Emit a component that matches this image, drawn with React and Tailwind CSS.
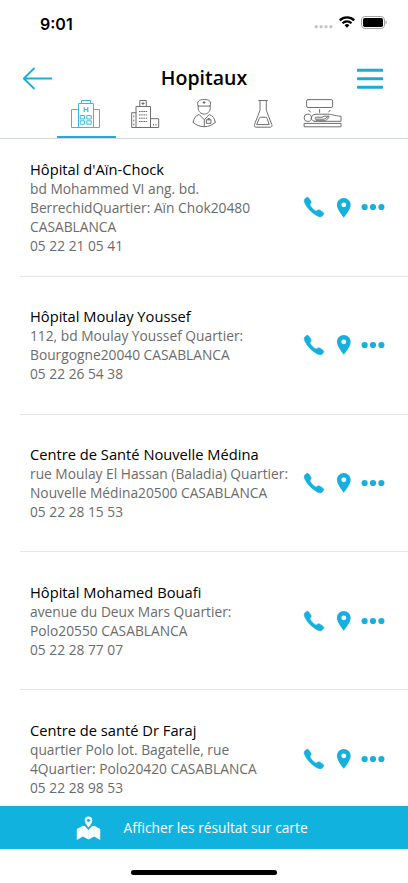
import React, { useState } from 'react';
import { IoIosCall } from 'react-icons/io';
import { MdPlace } from 'react-icons/md';

const hospitals = [
  { name: "Hôpital d'Aïn-Chock", address: ['bd Mohammed VI ang. bd.', 'BerrechidQuartier: Aïn Chok20480', 'CASABLANCA'], phone: '05 22 21 05 41' },
  { name: 'Hôpital Moulay Youssef', address: ['112, bd Moulay Youssef Quartier:', 'Bourgogne20040 CASABLANCA'], phone: '05 22 26 54 38' },
  { name: 'Centre de Santé Nouvelle Médina', address: ['rue Moulay El Hassan (Baladia) Quartier:', 'Nouvelle Médina20500 CASABLANCA'], phone: '05 22 28 15 53' },
  { name: 'Hôpital Mohamed Bouafi', address: ['avenue du Deux Mars Quartier:', 'Polo20550 CASABLANCA'], phone: '05 22 28 77 07' },
  { name: 'Centre de santé Dr Faraj', address: ['quartier Polo lot. Bagatelle, rue', '4Quartier: Polo20420 CASABLANCA'], phone: '05 22 28 98 53' }
];

const TabIcon = ({ children }) => (
  <svg className="w-10 h-8" viewBox="0 0 40 32" fill="none" stroke="currentColor" strokeWidth="1" strokeLinejoin="round" strokeLinecap="round">
    {children}
  </svg>
);

const HospitalIcon = () => (
  <TabIcon>
    <path d="M12.5 11.5h-7v18h28v-18h-6M12.5 29.5v-24h15v24M15.5 5.5v-3h9v3" />
    <path d="M18.2 9.5v4M21.8 9.5v4M18.2 11.5h3.6" strokeWidth="1.2" />
    <path d="M14.6 17.6h4v3.4h-4zM21.2 17.6h4v3.4h-4zM14.6 22.8h4v3.4h-4zM21.2 22.8h4v3.4h-4z" />
  </TabIcon>
);

const ClinicIcon = () => (
  <TabIcon>
    <path d="M11 29.5v-21h14.5v21M11 14.7H6.7v14.8h27v-8.8h-8.2M14.8 8.5v-6h6.5v6" />
    <path d="M18 4.3v2.4M16.8 5.5h2.4" />
    <path d="M14 13.5h8.4M14 16.9h8.4M14 20.2h8.4M14 23.5h8.4" strokeDasharray="1.6 0.6" strokeLinecap="butt" />
    <path d="M8.8 18v1M8.8 22v1M8.8 26v1M28.5 26.3v.8M31 26.3v.8" />
  </TabIcon>
);

const DoctorIcon = () => (
  <TabIcon>
    <path d="M14 7.7C12.6 3.6 14.8 1.5 20.2 1.5s7.4 2.1 6 6.2zM14.2 7.7v2.4c0 3.4 2.8 6 6 6s6-2.6 6-6V7.7" />
    <path d="M20.1 3.4v2.2M19 4.5h2.2" />
    <path d="M9.2 24.5c.4-4.4 2.3-6.7 6-8l5.1 5.3 4.9-5.3c3.7 1.3 5.6 3.6 6 8M9.2 24.5c2.8 2.5 6.7 4.2 11.1 4.2s8.1-1.7 10.9-4.2M20.3 21.8v6.9" />
    <path d="M22.7 21.8H27v3.5h-4.3zM24 21.8v-1.2h1.8v1.2" />
  </TabIcon>
);

const FlaskIcon = () => (
  <TabIcon>
    <path d="M15.7 2.5h8.7M17 2.5v9.8l-5.5 14.2c-.5 1.5.1 2.7 1.5 2.7h14.3c1.4 0 2-1.2 1.5-2.7l-5.5-14.2V2.5" />
    <path d="M16.3 20.2c.2-.8.6-1 1.2-1h5.3c.6 0 1 .2 1.2 1l2.2 6.4H14.1z" />
  </TabIcon>
);

const ScannerIcon = () => (
  <TabIcon>
    <rect x="4.6" y="1.6" width="26" height="7.9" rx="1.4" />
    <path d="M6.8 12.2l1.6 1.8M17.6 11.5v2.9M28.2 12.2l-1.6 1.8" />
    <circle cx="5.8" cy="19.8" r="3.7" />
    <path d="M12.5 23.3h26.5v-5.1c-7.6-.5-9.2-2-13.2-2H14c-5.8 0-6.3 7.1-1 7.1M14 21.2h8.4l4-2.9M14 21.2c-1.5-.4-1.2-2 0-2h6l2.5-1h4.3c.8 1.3-1.9 4-4.5 4.5h-8" />
    <path d="M2.5 25.4h36.5v3.4H2.5z" />
  </TabIcon>
);

const tabs = [HospitalIcon, ClinicIcon, DoctorIcon, FlaskIcon, ScannerIcon];

const StatusBar = () => (
  <div className="h-11 shrink-0 flex items-center justify-between pl-10 pr-[21.5px]">
    <span className="font-['Inter'] font-semibold text-base leading-5 mt-[3px]">9:01</span>
    <div className="flex items-center">
      <svg className="w-[19px] h-4 mt-2 mr-1.5" viewBox="0 0 19 16" fill="#c6c6c6">
        <circle cx="2.2" cy="8.8" r="1.7" />
        <circle cx="7.1" cy="8.8" r="1.7" />
        <circle cx="12" cy="8.8" r="1.7" />
        <circle cx="16.9" cy="8.8" r="1.7" />
      </svg>
      <svg className="w-4 h-3 mr-1.5" viewBox="0 0 16 12" fill="none" stroke="#000" strokeWidth="2.2">
        <path d="M.8 4.4a10.3 10.3 0 0 1 14.4 0M3.5 7.3a6.4 6.4 0 0 1 9 0" />
        <path d="M5.6 9.3a3.4 3.4 0 0 1 4.8 0L8 11.8z" fill="#000" stroke="none" />
      </svg>
      <svg className="w-[26px] h-[13px]" viewBox="0 0 26 13">
        <rect x=".5" y=".5" width="23" height="12" rx="3.4" fill="none" stroke="#a3a3a3" />
        <rect x="2" y="2" width="20" height="9" rx="1.8" />
        <path d="M24.6 4.6v3.8c1.4-.6 1.4-3.2 0-3.8" fill="#8a8a8a" />
      </svg>
    </div>
  </div>
);

const HospitalRow = ({ hospital, last }) => (
  <div className="h-[137.8px] shrink-0 pl-5">
    <div className={`h-full flex items-center pl-2.5 pr-[23px] ${last ? '' : 'border-b border-[#e6e6e6]'}`}>
      <div className="flex-1 whitespace-nowrap text-[13.78px] leading-[18.9px] text-[#6b6b6b]">
        <h2 className="text-[14.7px] leading-5 mb-px text-black">{hospital.name}</h2>
        {hospital.address.map((line) => (
          <p key={line}>{line}</p>
        ))}
        <p>{hospital.phone}</p>
      </div>
      <div className="flex items-center text-[#16b0de]">
        <button><IoIosCall className="w-[26px] h-[26px]" strokeWidth="14" strokeLinejoin="round" /></button>
        <button className="ml-[4.5px]"><MdPlace className="w-[23.6px] h-[23.6px]" /></button>
        <button className="ml-[5.5px]">
          <svg className="w-6 h-6" viewBox="0 0 24 24" fill="currentColor">
            <circle cx="3.6" cy="12" r="3.1" />
            <circle cx="12" cy="12" r="3.1" />
            <circle cx="20.4" cy="12" r="3.1" />
          </svg>
        </button>
      </div>
    </div>
  </div>
);

const App = () => {
  const [activeTab, setActiveTab] = useState(0);

  return (
    <div className="w-full h-[883px] overflow-hidden bg-white flex flex-col font-['Open_Sans',sans-serif] text-black">
      <StatusBar />
      <header className="h-[95px] shrink-0 border-b border-[#d3d8dc] flex flex-col">
        <div className="h-[54px] pt-[18px] pl-[22px] pr-[25px] flex items-start justify-between">
          <svg className="w-[31px] h-8" viewBox="0 0 31 32" fill="none" stroke="#22abd6" strokeWidth="1.8" strokeLinecap="round" strokeLinejoin="round">
            <path d="M29.5 16.5H1.8M12 6.5l-10.2 10 10.2 10" />
          </svg>
          <h1 className="text-[19.5px] leading-8 font-semibold -ml-0.5">Hopitaux</h1>
          <svg className="w-[26px] h-8" viewBox="0 0 26 32" fill="#1cabd9">
            <rect y="6.8" width="26" height="3" rx=".6" />
            <rect y="15.2" width="26" height="3" rx=".6" />
            <rect y="23.7" width="26" height="3" rx=".6" />
          </svg>
        </div>
        <nav className="h-10 flex pl-[56.5px]">
          {tabs.map((Icon, i) => (
            <button
              key={i}
              onClick={() => setActiveTab(i)}
              className={`w-[59px] h-10 flex justify-center border-b-2 ${i === activeTab ? 'border-[#22abd6] text-[#3bb8de]' : 'border-transparent text-[#6e6e6e]'}`}
            >
              <Icon />
            </button>
          ))}
        </nav>
      </header>

      <main className="h-[667px] shrink-0 overflow-hidden flex flex-col">
        {hospitals.map((hospital, i) => (
          <HospitalRow key={hospital.name} hospital={hospital} last={i === hospitals.length - 1} />
        ))}
      </main>

      <button className="h-[43px] shrink-0 bg-[#12b2df] text-white flex items-center pl-[76px]">
        <svg className="w-[25px] h-6" viewBox="0 0 25 24">
          <path d="M12.5 11.6C10 8.3 8.8 6.4 8.8 4.3a3.7 3.7 0 0 1 7.4 0c0 2.1-1.2 4-3.7 7.3z" fill="#fff" />
          <circle cx="12.5" cy="4.3" r="1.6" fill="#12b2df" />
          <path d="M.8 13l6-3.3 2.3.5 3.4 3.8 3.4-3.8 2.3-.5 6 3.3v11l-6-3.4-5.7 3-5.7-3-6 3.4z" fill="#fff" />
          <path d="M6.8 10v10.4M12.5 14v9M18.2 10v10.4" stroke="#c5ecf8" strokeWidth=".6" />
        </svg>
        <span className="ml-[22.5px] text-[13.75px] leading-5">Afficher les résultat sur carte</span>
      </button>

      <footer className="h-[34px] flex justify-center pt-[21px]">
        <div className="w-[146px] h-[5px] rounded-full bg-black" />
      </footer>
    </div>
  );
};

export default App;
